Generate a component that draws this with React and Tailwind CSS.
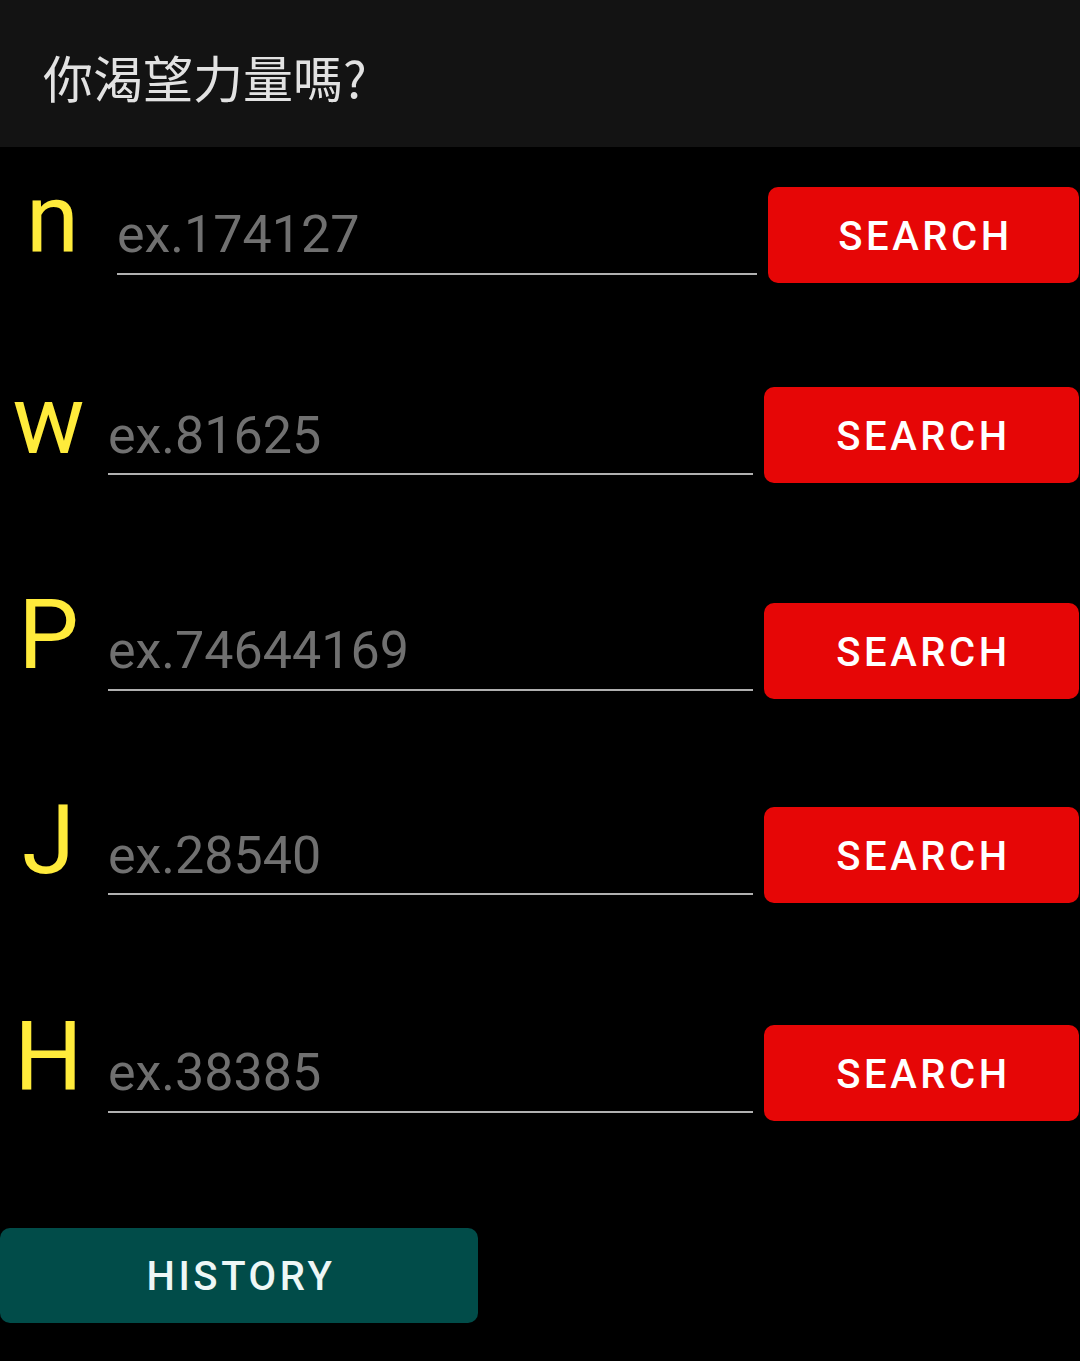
import { useState } from 'react'

const rows = [
  { letter: 'n', ph: 'ex.174127', lw: 'w-[105px]', il: 'ml-[12px]', bw: 'w-[311px]', mt: 'mt-[24px]' },
  { letter: 'w', ph: 'ex.81625', lw: 'w-[97px]', il: 'ml-[11px]', bw: 'w-[315px]', mt: 'mt-[89px]' },
  { letter: 'P', ph: 'ex.74644169', lw: 'w-[97px]', il: 'ml-[11px]', bw: 'w-[315px]', mt: 'mt-[104px]' },
  { letter: 'J', ph: 'ex.28540', lw: 'w-[97px]', il: 'ml-[11px]', bw: 'w-[315px]', mt: 'mt-[93px]' },
  { letter: 'H', ph: 'ex.38385', lw: 'w-[97px]', il: 'ml-[11px]', bw: 'w-[315px]', mt: 'mt-[106px]' },
]

export default function App() {
  const [values, setValues] = useState(rows.map(() => ''))

  return (
    <div className="min-h-[1361px] w-[1080px] bg-black" style={{ fontFamily: 'Roboto, "Noto Sans CJK TC", sans-serif' }}>

      {/* 標題列 */}
      <div className="h-[147px] bg-[#131313] flex items-center px-[43px] pt-[4px]">
        <h1 className="text-[50px] leading-none text-[#e2e2e2] font-normal" style={{ fontFamily: '"Noto Sans CJK TC", Roboto, sans-serif' }}>
          你渴望力量嗎?
        </h1>
      </div>

      {rows.map((r, i) => (
        <div key={r.letter} className={`flex items-end ${r.mt}`}>
          <div className="flex-1 flex items-baseline mb-[8px]">
            <span className={`${r.lw} shrink-0 text-center text-[96px] leading-none text-[#ffeb3b]`}>
              {r.letter}
            </span>
            <div className={`flex-1 ${r.il} border-b-2 border-[#b0b0b0] pb-[12px]`}>
              <input
                value={values[i]}
                onChange={e => {
                  const next = [...values]
                  next[i] = e.target.value
                  setValues(next)
                }}
                placeholder={r.ph}
                className="w-full h-[52px] bg-transparent text-[52px] leading-none text-white placeholder:text-[#707070] outline-none"
              />
            </div>
          </div>
          <button className={`${r.bw} ml-[11px] mr-[1px] h-[96px] shrink-0 rounded-[10px] bg-[#e60606] pt-[4px] pl-[4px] text-white text-[40px] font-medium tracking-[0.09em] leading-none shadow-[0_2px_3px_rgba(0,0,0,0.4)]`}>
            SEARCH
          </button>
        </div>
      ))}

      <button className="mt-[107px] w-[478px] h-[95px] rounded-[10px] bg-[#014c49] pt-[3px] pl-[4px] text-[#eef7f6] text-[40px] font-medium tracking-[0.09em] leading-none">
        HISTORY
      </button>
    </div>
  )
}
